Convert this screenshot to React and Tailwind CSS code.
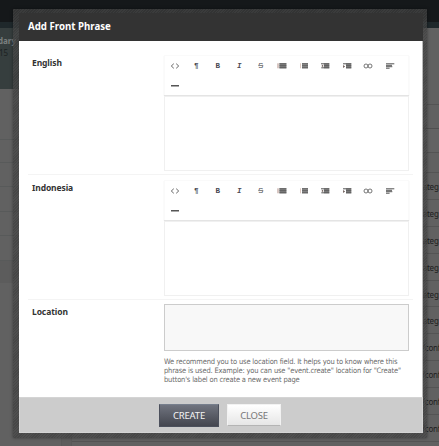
import React from "react";

function Icon({ name }) {
  const bars = (x, y, w) => <rect key={`${x}-${y}`} x={x} y={y} width={w} height="1" fill="#555" />;
  const letter = "text-[7.5px] leading-[10px] text-[#4a4a52]";
  if (name === "bold") return <span className={`${letter} font-bold font-['Liberation_Mono',monospace]`}>B</span>;
  if (name === "italic") return <span className={`${letter} font-bold italic font-['Liberation_Mono',monospace]`}>I</span>;
  if (name === "strike") return <span className={`${letter} line-through decoration-[#888] decoration-[0.5px] font-['Liberation_Sans',sans-serif]`}>S</span>;
  if (name === "pilcrow") return <span className={`${letter} font-bold font-['Liberation_Sans',sans-serif]`}>¶</span>;
  return (
    <svg width="10" height="8" viewBox="0 0 10 8" fill="none">
      {name === "code" && <path d="M3.8 1.7 1.3 4 3.8 6.3M6.2 1.7 8.7 4 6.2 6.3" stroke="#555" strokeWidth=".9" />}
      {name === "bullets" && (
        <>
          <path d="M1 1.3v5" stroke="#b08f86" strokeWidth="1" />
          <rect x="2.4" y="1.3" width="7" height="5" fill="#888" />
          {[1.3, 3.3, 5.3].map((y) => bars(2.4, y, 7))}
        </>
      )}
      {name === "numbers" && (
        <>
          <path d="M1.5 1.3v5" stroke="#d4bdb2" strokeWidth=".8" />
          <rect x="3" y="1.3" width="6" height="5" fill="#999" />
          {[1.3, 3.3, 5.3].map((y) => bars(3, y, 6))}
        </>
      )}
      {(name === "outdent" || name === "indent") && (
        <>
          <rect x="4" y="1.3" width="5.3" height="5" fill="#888" />
          {bars(1, 1.3, 8.3)}
          {bars(4, 3.3, 5.3)}
          {bars(name === "outdent" ? 1.3 : 4, 5.3, name === "outdent" ? 8 : 5.3)}
          <path d={name === "outdent" ? "M3.2 2.7v2.4L1.3 3.9z" : "M1.2 2.9v3L3 4.4z"} fill="#5c4a45" />
        </>
      )}
      {name === "link" && (
        <>
          <circle cx="3" cy="4" r="2" stroke="#666" strokeWidth=".9" />
          <circle cx="7" cy="4" r="2" stroke="#666" strokeWidth=".9" />
        </>
      )}
      {name === "align" && (
        <>
          {bars(1, 1.3, 8.3)}
          {bars(1, 2.8, 6)}
          {bars(1, 4.2, 6.3)}
          {bars(1, 5.7, 3.6)}
        </>
      )}
      {name === "rule" && <rect x="1" y="3" width="8" height="1.5" fill="#555" />}
    </svg>
  );
}

const tools = ["code", "pilcrow", "bold", "italic", "strike", "bullets", "numbers", "outdent", "indent", "link", "align", "rule"];

function Editor() {
  return (
    <div className="w-[245px]">
      <div className="h-[40px] border-x border-t border-[#fafafa] shadow-[0_1px_1px_#e4e4e4]">
        <div className="-ml-[1px] flex flex-wrap">
          {tools.map((t) => (
            <span key={t} className="flex h-[20px] w-[21.5px] items-center justify-center">
              <Icon name={t} />
            </span>
          ))}
        </div>
      </div>
      <div className="mt-px h-[75px] border border-[#f0f0f0]" />
    </div>
  );
}

function Row({ label, children, className }) {
  return (
    <div className={`flex ${className}`}>
      <div className="w-[136px] shrink-0 pl-[4px] pt-[2px] text-[8.5px] leading-[12px] font-bold tracking-[-0.1px] text-[#333]">{label}</div>
      {children}
    </div>
  );
}

const leftRows = ["h-[51px]", "h-[23px]", "h-[24px]", "h-[25px]", "h-[24px]", "h-[25px]"];
const rightRows = ["categ", "categ", "categ", "categ", "categ", "categ", "/conf", "/conf", "/conf", "/conf"];

function Backdrop() {
  return (
    <div className="flex h-full flex-col bg-[#616161]">
      <div className="h-[22px] shrink-0 bg-[#15181a]" />
      <div className="h-[6px] shrink-0 bg-[#1f282b]" />
      <div className="flex min-h-0 flex-1">
        <div className="w-[61px] shrink-0">
          <div className="h-[61px] bg-[#363e3e] pt-[7px] text-[8px] leading-[12px]">
            <div className="-ml-[2px] font-bold text-[#7b8080]">dary</div>
            <div className="-ml-px text-[#1c2222]">15</div>
          </div>
          {leftRows.map((h, i) => (
            <div key={i} className={`border-b border-[#585a5a] ${h}`} />
          ))}
          <div className="h-[22px] bg-[#5c5c5c]" />
        </div>
        <div className="w-[11px] shrink-0 border-x border-[#595959] bg-[#5d5d5d]" />
        <div className="flex-1">
          <div className="h-[77px] border-b border-[#545454]" />
          <div className="h-[24px] border-b border-[#505050]" />
          <div className="h-[24px] border-b border-[#545454] bg-[#636363]" />
          <div className="h-[20px] border-b border-[#545454]" />
          {rightRows.map((text, i) => (
            <div key={i} className="h-[26.9px] border-b border-[#545454] text-[8px] leading-[27px] tracking-[-0.2px] text-[#202020]">
              <span className={text === "categ" ? "ml-[347px]" : "ml-[350px]"}>{text}</span>
            </div>
          ))}
        </div>
      </div>
    </div>
  );
}

export default function App() {
  return (
    <div className="relative h-[446px] w-[439px] overflow-hidden font-['Noto_Sans','Open_Sans',sans-serif]">
      <Backdrop />
      <div className="absolute left-[13px] top-[9px] flex h-[429px] w-[414px] flex-col bg-black/20 bg-[repeating-linear-gradient(135deg,#444444aa_0px,#444444aa_1px,#505050aa_1px,#505050aa_2px)] pr-[4px] pl-[6px] pt-[4px] pb-[5px] shadow-[0_0_3px_#0006]">
        <div className="flex h-[28px] shrink-0 items-center bg-[#333] pl-[9px] pt-px text-[9.7px] font-bold whitespace-nowrap text-white">
          Add Front Phrase
        </div>
        <div className="h-[356px] shrink-0 border-r border-[#bbb] bg-white px-[9px]">
          <Row label="English" className="h-[134px] border-b border-[#f4f4f4] pt-[14px]">
            <Editor />
          </Row>
          <Row label="Indonesia" className="h-[125px] border-b border-[#f4f4f4] pt-[5px]">
            <Editor />
          </Row>
          <Row label="Location" className="pt-[4px]">
            <div className="w-[245px]">
              <div className="h-[47px] border border-[#ccc] bg-[#f8f8f8]" />
              <p className="mt-[6px] font-['DejaVu_Sans_Condensed','DejaVu_Sans',sans-serif] text-[7.5px] leading-[9px] tracking-[-0.18px] whitespace-nowrap text-[#6c6c6c]">
                We recommend you to use location field. It helps you to know where this
                <br />
                phrase is used. Example: you can use "event.create" location for "Create"
                <br />
                button's label on create a new event page
              </p>
            </div>
          </Row>
        </div>
        <div className="flex flex-1 items-center gap-[8px] border border-[#d4d4d4] bg-[#ccc] pl-[139px] text-[9.5px] leading-none tracking-[-0.2px]">
          <button className="h-[23px] w-[60px] border border-[#4c505c] border-t-[#777f8d] bg-linear-to-b from-[#70747f] to-[#44464f] pt-px text-[#f4f4f4]">
            CREATE
          </button>
          <button className="h-[22px] w-[54px] border border-[#f2f2f2] border-b-[#b4b4b4] bg-linear-to-b from-white to-[#e6e6e6] pt-px text-[#777]">
            CLOSE
          </button>
        </div>
      </div>
    </div>
  );
}
